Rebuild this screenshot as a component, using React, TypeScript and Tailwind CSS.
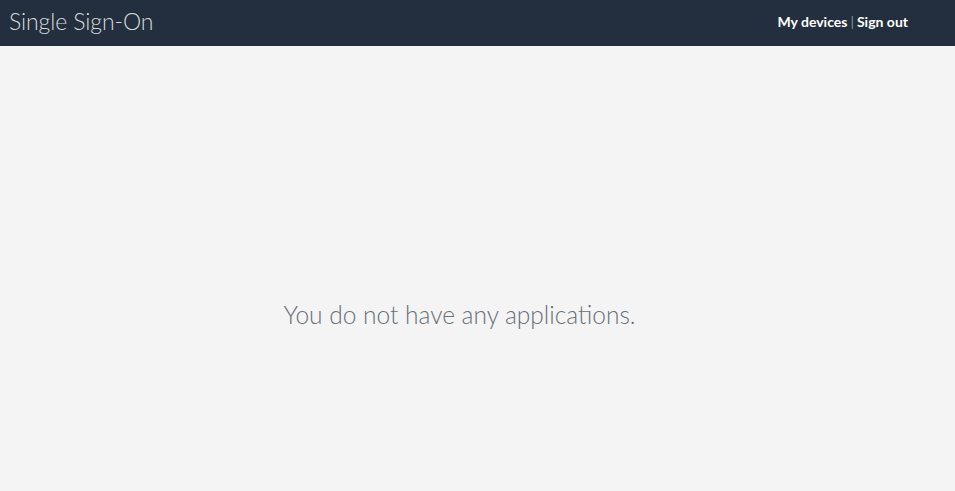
export default function App() {
  return (
    <div className="min-h-screen bg-[#f4f4f4] font-['Lato','Open_Sans',sans-serif]">
      <header className="h-[46px] bg-[#232f3e] flex items-center justify-between pl-[9px] pr-[47px] pb-[4px]">
        <span className="text-[23px] font-light text-[#d5dbdb] leading-none tracking-[-0.1px]">Single Sign-On</span>
        <nav className="text-[14px] font-bold text-white flex items-center">
          <a href="#">My devices</a>
          <span className="text-[#879596] font-normal px-[3px]">|</span>
          <a href="#">Sign out</a>
        </nav>
      </header>
      <main className="pt-[254px] pr-[36px] text-center">
        <p className="text-[24.5px] font-light text-[#687078] leading-[30px]">You do not have any applications.</p>
      </main>
    </div>
  )
}
